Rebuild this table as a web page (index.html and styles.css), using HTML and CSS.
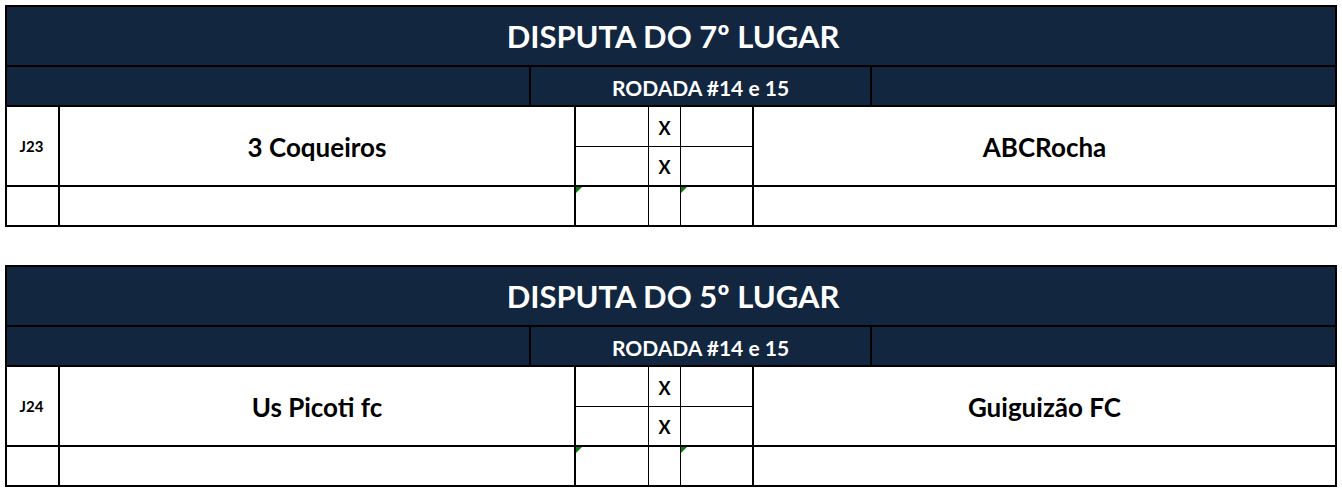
FILE: index.html
```html
<!DOCTYPE html>
<html lang="pt">
<head>
<meta charset="utf-8">
<title>Disputas</title>
<link rel="stylesheet" href="styles.css">
</head>
<body>
<div class="page">
  <section class="board">
    <div class="title">DISPUTA DO 7º LUGAR</div>
    <div class="round-row">
      <div class="navy"></div>
      <div class="navy round">RODADA #14 e 15</div>
      <div class="navy"></div>
    </div>
    <div class="match-row">
      <div class="cell code">J23</div>
      <div class="cell team">3 Coqueiros</div>
      <div class="score score-2">
        <div class="cell"></div><div class="cell vs">X</div><div class="cell"></div>
        <div class="cell"></div><div class="cell vs">X</div><div class="cell"></div>
      </div>
      <div class="cell team">ABCRocha</div>
    </div>
    <div class="extra-row">
      <div class="cell"></div>
      <div class="cell"></div>
      <div class="score">
        <div class="cell flag"></div><div class="cell"></div><div class="cell flag"></div>
      </div>
      <div class="cell"></div>
    </div>
  </section>

  <section class="board">
    <div class="title">DISPUTA DO 5º LUGAR</div>
    <div class="round-row">
      <div class="navy"></div>
      <div class="navy round">RODADA #14 e 15</div>
      <div class="navy"></div>
    </div>
    <div class="match-row">
      <div class="cell code">J24</div>
      <div class="cell team">Us Picoti fc</div>
      <div class="score score-2">
        <div class="cell"></div><div class="cell vs">X</div><div class="cell"></div>
        <div class="cell"></div><div class="cell vs">X</div><div class="cell"></div>
      </div>
      <div class="cell team">Guiguizão FC</div>
    </div>
    <div class="extra-row">
      <div class="cell"></div>
      <div class="cell"></div>
      <div class="score">
        <div class="cell flag"></div><div class="cell"></div><div class="cell flag"></div>
      </div>
      <div class="cell"></div>
    </div>
  </section>
</div>
</body>
</html>
```
FILE: styles.css
```css
html, body {
  margin: 0;
  padding: 0;
  background: #ffffff;
}
body {
  font-family: Lato, "Open Sans", "Liberation Sans", sans-serif;
  font-weight: 700;
  color: #000;
}
.page {
  padding: 5px 0 0 5px;
  display: flex;
  flex-direction: column;
  gap: 38px;
}
.board {
  width: 1328px;
  border: 2px solid #000;
  background: #000;
  display: flex;
  flex-direction: column;
  gap: 2px;
}
.title {
  height: 58px;
  background: #12263f;
  color: #fff;
  font-size: 31px;
  display: flex;
  align-items: center;
  justify-content: center;
  padding-left: 4px;
  box-sizing: border-box;
}
.round-row {
  height: 38px;
  display: grid;
  grid-template-columns: 522px 339px 1fr;
  column-gap: 2px;
}
.navy {
  background: #12263f;
}
.round {
  color: #fff;
  font-size: 21px;
  display: flex;
  align-items: center;
  justify-content: center;
  padding-top: 2px;
  box-sizing: border-box;
}
.match-row, .extra-row {
  display: grid;
  grid-template-columns: 51px 514px 176px 1fr;
  column-gap: 2px;
}
.match-row { height: 78px; }
.extra-row { height: 38px; }
.cell {
  background: #fff;
  position: relative;
}
.score {
  display: grid;
  grid-template-columns: 72px 31px 71px;
  gap: 1px;
  background: #000;
}
.score-2 {
  grid-template-rows: 39px 38px;
}
.code {
  font-size: 15px;
  display: flex;
  align-items: center;
  justify-content: center;
  padding-right: 2px;
}
.team {
  font-size: 26px;
  display: flex;
  align-items: center;
  justify-content: center;
  padding-top: 1px;
  box-sizing: border-box;
}
.vs {
  font-size: 18px;
  display: flex;
  align-items: center;
  justify-content: center;
  padding-top: 2px;
  box-sizing: border-box;
}
.flag::before {
  content: "";
  position: absolute;
  left: 0;
  top: 0;
  border-top: 6px solid #0a7d0a;
  border-right: 6px solid transparent;
}
```
